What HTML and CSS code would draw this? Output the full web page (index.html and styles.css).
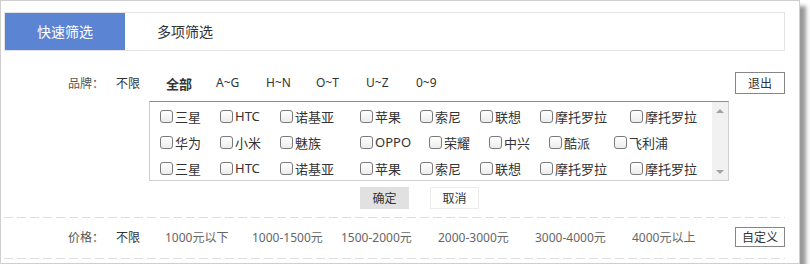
FILE: index.html
```
<!DOCTYPE html>
<html lang="zh-CN">

<head>
    <meta charset="UTF-8">
    <meta name="viewport" content="width=device-width, initial-scale=1.0">
    <title>品牌筛选</title>
    <link rel="stylesheet" href="styles.css">
</head>

<body>
    <div class="panel">
        <div class="tabs">
            <div class="tab active">快速筛选</div>
            <div class="tab">多项筛选</div>
        </div>

        <div class="row brand-row">
            <div class="label">品牌：</div>
            <div class="letters">
                <span class="letter">不限</span>
                <span class="letter bold">全部</span>
                <span class="letter">A~G</span>
                <span class="letter">H~N</span>
                <span class="letter">O~T</span>
                <span class="letter">U~Z</span>
                <span class="letter">0~9</span>
            </div>
            <button class="btn-line">退出</button>
        </div>

        <div class="listbox">
            <div class="brands">
                <div class="brand-line">
                    <label class="item w60"><span class="cb"></span>三星</label>
                    <label class="item w60"><span class="cb"></span>HTC</label>
                    <label class="item w80"><span class="cb"></span>诺基亚</label>
                    <label class="item w60"><span class="cb"></span>苹果</label>
                    <label class="item w60"><span class="cb"></span>索尼</label>
                    <label class="item w60"><span class="cb"></span>联想</label>
                    <label class="item w90"><span class="cb"></span>摩托罗拉</label>
                    <label class="item"><span class="cb"></span>摩托罗拉</label>
                </div>
                <div class="brand-line">
                    <label class="item w60"><span class="cb"></span>华为</label>
                    <label class="item w60"><span class="cb"></span>小米</label>
                    <label class="item w80"><span class="cb"></span>魅族</label>
                    <label class="item w69"><span class="cb"></span>OPPO</label>
                    <label class="item w60"><span class="cb"></span>荣耀</label>
                    <label class="item w60"><span class="cb"></span>中兴</label>
                    <label class="item w65"><span class="cb"></span>酷派</label>
                    <label class="item"><span class="cb"></span>飞利浦</label>
                </div>
                <div class="brand-line">
                    <label class="item w60"><span class="cb"></span>三星</label>
                    <label class="item w60"><span class="cb"></span>HTC</label>
                    <label class="item w80"><span class="cb"></span>诺基亚</label>
                    <label class="item w60"><span class="cb"></span>苹果</label>
                    <label class="item w60"><span class="cb"></span>索尼</label>
                    <label class="item w60"><span class="cb"></span>联想</label>
                    <label class="item w90"><span class="cb"></span>摩托罗拉</label>
                    <label class="item"><span class="cb"></span>摩托罗拉</label>
                </div>
            </div>
            <div class="scrollbar">
                <span class="arrow up"></span>
                <span class="arrow down"></span>
            </div>
        </div>

        <div class="actions">
            <button class="btn-ok">确定</button>
            <button class="btn-cancel">取消</button>
        </div>

        <div class="dash"></div>
        <div class="row price-row">
            <div class="label">价格：</div>
            <div class="prices">
                <span class="price p49 dark">不限</span>
                <span class="price p87">1000元以下</span>
                <span class="price p89">1000-1500元</span>
                <span class="price p97">1500-2000元</span>
                <span class="price p97">2000-3000元</span>
                <span class="price p97">3000-4000元</span>
                <span class="price">4000元以上</span>
            </div>
            <button class="btn-line small">自定义</button>
        </div>
        <div class="dash"></div>
    </div>
</body>

</html>
```

FILE: styles.css
```
body {
    margin: 0;
    background: #fff;
    font-family: 'Noto Sans', 'Noto Sans CJK SC', sans-serif;
    color: #333;
}

.panel {
    width: 800px;
    height: 264px;
    box-sizing: border-box;
    border: 1px solid #cfcfcf;
    box-shadow: 6px 6px 4px #999;
    padding: 11px 14px 0 3px;
    background: #fff;
}

.tabs {
    display: flex;
    height: 39px;
    box-sizing: border-box;
    border: 1px solid #e3e3e3;
}

.tab {
    width: 120px;
    line-height: 37px;
    text-align: center;
    font-size: 14px;
    color: #333;
}

.tab.active {
    background-color: #5b84d3;
    color: #fff;
}

.row {
    display: flex;
    align-items: center;
}

.label {
    width: 100px;
    text-align: right;
    font-size: 12px;
    color: #555;
    margin-right: 12px;
}

/* brand letters */
.brand-row {
    height: 24px;
    margin-top: 20px;
}

.letters {
    display: flex;
    flex: 1;
}

.letter {
    width: 50px;
    font-size: 12px;
    color: #333;
}

.letter.bold {
    font-weight: bold;
    font-size: 13px;
}

.btn-line {
    width: 50px;
    height: 22px;
    padding: 0;
    border: 1px solid #858585;
    background: #fff;
    font-family: inherit;
    font-size: 12px;
    color: #333;
}

.btn-line.small {
    height: 20px;
}

.listbox {
    display: flex;
    width: 580px;
    height: 80px;
    box-sizing: border-box;
    margin: 6px 0 0 145px;
    border: 1px solid #d0d0d0;
    border-top-color: #8c8c8c;
}

.brands {
    flex: 1;
    padding: 1px 0 0 10px;
}

.brand-line {
    display: flex;
    height: 26px;
    align-items: center;
}

.item {
    display: flex;
    align-items: center;
    font-size: 13px;
    color: #333;
    white-space: nowrap;
}

.w60 { width: 60px; }
.w65 { width: 65px; }
.w69 { width: 69px; }
.w80 { width: 80px; }
.w90 { width: 90px; }

.cb {
    width: 13px;
    height: 13px;
    box-sizing: border-box;
    border: 1px solid #7a7a7a;
    border-radius: 3px;
    background: linear-gradient(#fff, #ececec);
    margin-right: 2px;
}

.scrollbar {
    width: 16px;
    background: #f1f1f1;
    display: flex;
    flex-direction: column;
    justify-content: space-between;
    align-items: center;
    padding: 7px 0 6px;
}

.arrow {
    width: 0;
    height: 0;
    border-left: 4px solid transparent;
    border-right: 4px solid transparent;
}

.arrow.up {
    border-bottom: 4px solid #a3a3a3;
}

.arrow.down {
    border-top: 4px solid #a3a3a3;
}

.actions {
    display: flex;
    margin: 6px 0 0 356px;
    height: 22px;
}

.actions button {
    width: 49px;
    height: 22px;
    padding: 0;
    font-family: inherit;
    font-size: 12px;
    color: #333;
}

.btn-ok {
    background: #e1e1e1;
    border: 1px solid #e1e1e1;
    margin-right: 21px;
}

.btn-cancel {
    background: #fff;
    border: 1px solid #ececec;
}

.dash {
    height: 1px;
    background: repeating-linear-gradient(to right, #dedede 0 9px, transparent 9px 13px);
}

.actions + .dash {
    margin-top: 8px;
}

.price-row {
    height: 40px;
    padding-bottom: 2px;
    box-sizing: border-box;
}

.prices {
    display: flex;
    flex: 1;
}

.price {
    font-size: 12px;
    color: #666;
    white-space: nowrap;
}

.price.dark {
    color: #333;
}

.p49 { width: 49px; }
.p87 { width: 87px; }
.p89 { width: 89px; }
.p97 { width: 97px; }
```
